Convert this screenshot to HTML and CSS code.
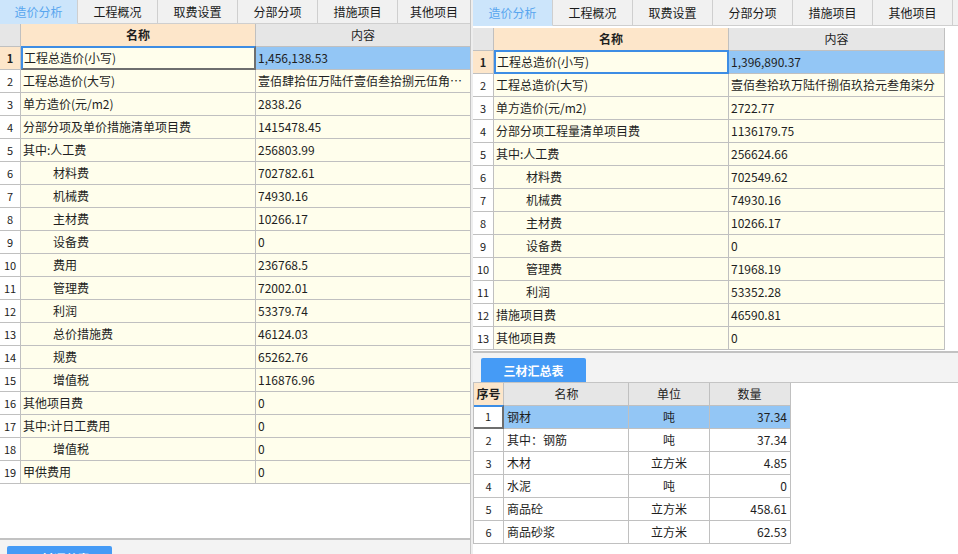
FILE: index.html
```html
<!DOCTYPE html>
<html lang="zh-CN">
<head>
<meta charset="utf-8">
<title>造价分析</title>
<link rel="stylesheet" href="styles.css">
</head>
<body>
<div class="app">
  <section class="pane pane-left">
    <nav class="tabs">
      <div class="tab active w78">造价分析</div>
      <div class="tab">工程概况</div>
      <div class="tab">取费设置</div>
      <div class="tab">分部分项</div>
      <div class="tab">措施项目</div>
      <div class="tab last">其他项目</div>
    </nav>
    <div class="grid-area">
      <div class="grid grid-l">
        <div class="row head">
          <div class="c num gray"></div>
          <div class="c name peach b ctr">名称</div>
          <div class="c val gray ctr">内容</div>
        </div>
        <div class="row">
          <div class="c num peach b">1</div>
          <div class="c name focus-l">工程总造价(小写)</div>
          <div class="c val sel">1,456,138.53</div>
        </div>
        <div class="row"><div class="c num">2</div><div class="c name">工程总造价(大写)</div><div class="c val">壹佰肆拾伍万陆仟壹佰叁拾捌元伍角…</div></div>
        <div class="row"><div class="c num">3</div><div class="c name">单方造价(元/m2)</div><div class="c val">2838.26</div></div>
        <div class="row"><div class="c num">4</div><div class="c name">分部分项及单价措施清单项目费</div><div class="c val">1415478.45</div></div>
        <div class="row"><div class="c num">5</div><div class="c name">其中:人工费</div><div class="c val">256803.99</div></div>
        <div class="row"><div class="c num">6</div><div class="c name ind">材料费</div><div class="c val">702782.61</div></div>
        <div class="row"><div class="c num">7</div><div class="c name ind">机械费</div><div class="c val">74930.16</div></div>
        <div class="row"><div class="c num">8</div><div class="c name ind">主材费</div><div class="c val">10266.17</div></div>
        <div class="row"><div class="c num">9</div><div class="c name ind">设备费</div><div class="c val">0</div></div>
        <div class="row"><div class="c num">10</div><div class="c name ind">费用</div><div class="c val">236768.5</div></div>
        <div class="row"><div class="c num">11</div><div class="c name ind">管理费</div><div class="c val">72002.01</div></div>
        <div class="row"><div class="c num">12</div><div class="c name ind">利润</div><div class="c val">53379.74</div></div>
        <div class="row"><div class="c num">13</div><div class="c name ind">总价措施费</div><div class="c val">46124.03</div></div>
        <div class="row"><div class="c num">14</div><div class="c name ind">规费</div><div class="c val">65262.76</div></div>
        <div class="row"><div class="c num">15</div><div class="c name ind">增值税</div><div class="c val">116876.96</div></div>
        <div class="row"><div class="c num">16</div><div class="c name">其他项目费</div><div class="c val">0</div></div>
        <div class="row"><div class="c num">17</div><div class="c name">其中:计日工费用</div><div class="c val">0</div></div>
        <div class="row"><div class="c num">18</div><div class="c name ind">增值税</div><div class="c val">0</div></div>
        <div class="row"><div class="c num">19</div><div class="c name">甲供费用</div><div class="c val">0</div></div>
      </div>
    </div>
    <div class="bar bar-l"><button class="btn">三材汇总表</button></div>
  </section>

  <div class="splitter"></div>

  <section class="pane pane-right">
    <nav class="tabs tabs-r">
      <div class="tab active">造价分析</div>
      <div class="tab">工程概况</div>
      <div class="tab">取费设置</div>
      <div class="tab">分部分项</div>
      <div class="tab">措施项目</div>
      <div class="tab">其他项目</div>
      <div class="tab-rest"></div>
    </nav>
    <div class="grid-area top-r">
      <div class="grid grid-r">
        <div class="row head">
          <div class="c num gray"></div>
          <div class="c name peach b ctr">名称</div>
          <div class="c val gray ctr">内容</div>
        </div>
        <div class="row">
          <div class="c num peach b">1</div>
          <div class="c name focus-r">工程总造价(小写)</div>
          <div class="c val sel">1,396,890.37</div>
        </div>
        <div class="row"><div class="c num">2</div><div class="c name">工程总造价(大写)</div><div class="c val">壹佰叁拾玖万陆仟捌佰玖拾元叁角柒分</div></div>
        <div class="row"><div class="c num">3</div><div class="c name">单方造价(元/m2)</div><div class="c val">2722.77</div></div>
        <div class="row"><div class="c num">4</div><div class="c name">分部分项工程量清单项目费</div><div class="c val">1136179.75</div></div>
        <div class="row"><div class="c num">5</div><div class="c name">其中:人工费</div><div class="c val">256624.66</div></div>
        <div class="row"><div class="c num">6</div><div class="c name ind">材料费</div><div class="c val">702549.62</div></div>
        <div class="row"><div class="c num">7</div><div class="c name ind">机械费</div><div class="c val">74930.16</div></div>
        <div class="row"><div class="c num">8</div><div class="c name ind">主材费</div><div class="c val">10266.17</div></div>
        <div class="row"><div class="c num">9</div><div class="c name ind">设备费</div><div class="c val">0</div></div>
        <div class="row"><div class="c num">10</div><div class="c name ind">管理费</div><div class="c val">71968.19</div></div>
        <div class="row"><div class="c num">11</div><div class="c name ind">利润</div><div class="c val">53352.28</div></div>
        <div class="row"><div class="c num">12</div><div class="c name">措施项目费</div><div class="c val">46590.81</div></div>
        <div class="row"><div class="c num">13</div><div class="c name">其他项目费</div><div class="c val">0</div></div>
      </div>
    </div>
    <div class="bar bar-r"><button class="btn">三材汇总表</button></div>
    <div class="sum-area">
      <div class="grid sum">
        <div class="row head">
          <div class="c s-no peach b ctr">序号</div>
          <div class="c s-name gray ctr">名称</div>
          <div class="c s-unit gray ctr">单位</div>
          <div class="c s-qty gray ctr">数量</div>
        </div>
        <div class="row">
          <div class="c s-no ctr focus-s">1</div>
          <div class="c s-name sel">钢材</div>
          <div class="c s-unit sel ctr">吨</div>
          <div class="c s-qty sel rt">37.34</div>
        </div>
        <div class="row"><div class="c s-no ctr">2</div><div class="c s-name">其中：钢筋</div><div class="c s-unit ctr">吨</div><div class="c s-qty rt">37.34</div></div>
        <div class="row"><div class="c s-no ctr">3</div><div class="c s-name">木材</div><div class="c s-unit ctr">立方米</div><div class="c s-qty rt">4.85</div></div>
        <div class="row"><div class="c s-no ctr">4</div><div class="c s-name">水泥</div><div class="c s-unit ctr">吨</div><div class="c s-qty rt">0</div></div>
        <div class="row"><div class="c s-no ctr">5</div><div class="c s-name">商品砼</div><div class="c s-unit ctr">立方米</div><div class="c s-qty rt">458.61</div></div>
        <div class="row"><div class="c s-no ctr">6</div><div class="c s-name">商品砂浆</div><div class="c s-unit ctr">立方米</div><div class="c s-qty rt">62.53</div></div>
      </div>
    </div>
  </section>
</div>
</body>
</html>
```

FILE: styles.css
```css
* { box-sizing: border-box; }
html, body {
  margin: 0;
  padding: 0;
  width: 958px;
  height: 554px;
  overflow: hidden;
  background: #ffffff;
  font-family: "Noto Sans CJK SC", "Noto Sans", sans-serif;
  font-size: 12px;
  color: #1e1e1e;
}
.app {
  display: flex;
  width: 958px;
  height: 554px;
}
.pane {
  display: flex;
  flex-direction: column;
  height: 554px;
}
.pane-left { width: 470px; }
.pane-right { width: 485px; }
.splitter {
  width: 3px;
  background: #eeeeee;
  border-left: 1px solid #c4c4c4;
}

/* tabs */
.tabs {
  display: flex;
  height: 24px;
  flex: 0 0 auto;
  background: #f2f2f2;
}
.tabs-r { height: 26px; }
.tab {
  width: 80px;
  flex: 0 0 auto;
  display: flex;
  align-items: center;
  justify-content: center;
  background: #f1f1f1;
  border-right: 1px solid #cfcfcf;
  border-bottom: 1px solid #cfcfcf;
  color: #1a1a1a;
  font-size: 12px;
}
.tab.w78 { width: 78px; }
.tab.last { width: 72px; border-right: none; }
.tab.active {
  background: #cce5fb;
  color: #58a5ef;
  border-bottom-color: #cce5fb;
}
.tab-rest {
  flex: 1;
  background: #f1f1f1;
  border-bottom: 1px solid #cfcfcf;
}

/* grids */
.grid-area {
  flex: 1 1 auto;
  background: #ffffff;
  border-bottom: 2px solid #c2c2c2;
  overflow: hidden;
}
.top-r { padding-top: 2px; flex: 0 0 327px; }
.grid { display: flex; flex-direction: column; }
.row {
  display: flex;
  height: 23px;
  flex: 0 0 23px;
}
.c {
  height: 23px;
  line-height: 22px;
  border-right: 1px solid #c0c0c0;
  border-bottom: 1px solid #c0c0c0;
  background: #fffeec;
  padding: 0 2px;
  white-space: nowrap;
  overflow: hidden;
}
.c.num {
  background: #ffffff;
  text-align: center;
  padding: 0;
  font-size: 11px;
  color: #222;
}
.grid-l .num { width: 21px; }
.grid-l .name { width: 235px; }
.grid-l .val { width: 214px; border-right: none; }
.grid-r .num { width: 21px; }
.grid-r .name { width: 235px; }
.grid-r .val { width: 216px; }
.ind { padding-left: 32px; }

.c.peach { background: #fde6ca; }
.c.gray { background: #e6e6e6; }
.c.sel { background: #93c6f5; }
.b { font-weight: bold; }
.ctr { text-align: center; }
.rt { text-align: right; }
.head .c { color: #1e1e1e; font-size: 12px; }

.focus-l {
  border-top: 2px solid #3d8de4;
  border-left: 2px solid #3d8de4;
  border-right: 2px solid #6e6e6e;
  border-bottom: 2px solid #6e6e6e;
  line-height: 19px;
  padding-left: 1px;
  margin-top: -1px;
  height: 24px;
}
.focus-r {
  border: 2px solid #3d8de4;
  line-height: 19px;
  padding-left: 1px;
  margin-top: -1px;
  height: 24px;
}

/* bottom bars */
.bar {
  flex: 0 0 auto;
  background: #f3f3f3;
}
.bar-l { height: 14px; padding: 6px 0 0 7px; }
.bar-r { height: 29px; padding: 5px 0 0 8px; }
.btn {
  display: block;
  width: 105px;
  height: 24px;
  border: none;
  border-radius: 2px 2px 0 0;
  background: #459bf6;
  color: #ffffff;
  font-family: "Noto Sans CJK SC", "Noto Sans", sans-serif;
  font-size: 12px;
  font-weight: bold;
  padding: 0;
}

/* summary table */
.sum-area {
  flex: 1 1 auto;
  background: #ffffff;
  border-top: 1px solid #c4c4c4;
}
.sum { border-left: 1px solid #c0c0c0; width: 318px; }
.sum .c { background: #ffffff; }
.sum .c.peach { background: #fde6ca; }
.sum .c.gray { background: #e6e6e6; }
.sum .c.sel { background: #93c6f5; }
.s-no { width: 30px; font-size: 11px; padding: 0; }
.s-name { width: 125px; padding-left: 3px; }
.s-unit { width: 81px; }
.s-qty { width: 81px; padding-right: 3px; }
.head .s-no { font-size: 12px; }
.focus-s {
  border-top: 2px solid #3d8de4;
  border-right: 2px solid #6e6e6e;
  border-bottom: 2px solid #6e6e6e;
  line-height: 19px;
  margin-top: -1px;
  height: 24px;
}
```
